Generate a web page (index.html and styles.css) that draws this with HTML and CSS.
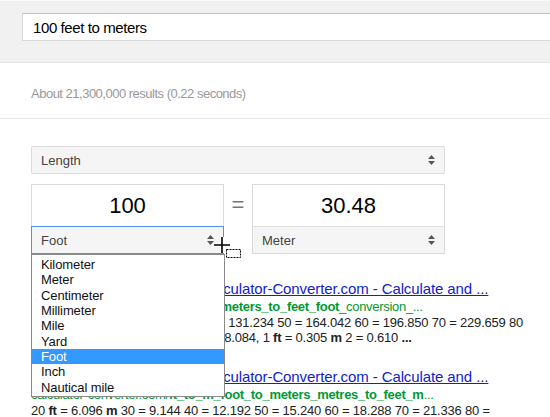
FILE: index.html
```html
<!DOCTYPE html>
<html>
<head>
<meta charset="utf-8">
<title>100 feet to meters</title>
<link rel="stylesheet" href="styles.css">
</head>
<body>
<div class="header">
  <div class="searchbox">100 feet to meters</div>
</div>
<div class="stats">About 21,300,000 results (0.22 seconds)</div>
<div class="main">
  <div class="conv">
    <div class="select">
      <span>Length</span>
      <svg class="arrows" width="7" height="10" viewBox="0 0 7 10"><path d="M3.5 0 L7 4 L0 4 Z M0 6 L7 6 L3.5 10 Z" fill="#555"/></svg>
    </div>
    <div class="row">
      <div class="box">
        <div class="value">100</div>
        <div class="select inbox focused">
          <span>Foot</span>
          <svg class="arrows" width="7" height="10" viewBox="0 0 7 10"><path d="M3.5 0 L7 4 L0 4 Z M0 6 L7 6 L3.5 10 Z" fill="#555"/></svg>
          <ul class="dropdown">
            <li>Kilometer</li>
            <li>Meter</li>
            <li>Centimeter</li>
            <li>Millimeter</li>
            <li>Mile</li>
            <li>Yard</li>
            <li class="sel">Foot</li>
            <li>Inch</li>
            <li>Nautical mile</li>
          </ul>
        </div>
      </div>
      <div class="eq">=</div>
      <div class="box">
        <div class="value">30.48</div>
        <div class="select inbox">
          <span>Meter</span>
          <svg class="arrows" width="7" height="10" viewBox="0 0 7 10"><path d="M3.5 0 L7 4 L0 4 Z M0 6 L7 6 L3.5 10 Z" fill="#555"/></svg>
        </div>
      </div>
    </div>
  </div>
  <div class="results">
    <div class="result">
      <a class="title" href="#">Meter to Feet Converter - Calculator-Converter.com - Calculate and ...</a>
      <div class="url">calculator-converter.com/<b>m_to_ft_meters_to_feet_foot</b>_conversion_...</div>
      <div class="snippet"><b>...</b> 20 <b>m</b> = 65.617 30 = 98.425 40 = 131.234 50 = 164.042 60 = 196.850 70 = 229.659 80<br>= 262.467, 90 = 295.276, 100 = 328.084, 1 <b>ft</b> = 0.305 <b>m</b> 2 = 0.610 <b>...</b></div>
    </div>
    <div class="result">
      <a class="title" href="#">Feet to Meter Converter - Calculator-Converter.com - Calculate and ...</a>
      <div class="url">calculator-converter.com/<b>ft_to_m_foot_to_meters_metres_to_feet_m</b>...</div>
      <div class="snippet">20 <b>ft</b> = 6.096 <b>m</b> 30 = 9.144 40 = 12.192 50 = 15.240 60 = 18.288 70 = 21.336 80 =</div>
    </div>
  </div>
</div>
<svg class="cursor" width="34" height="26" viewBox="0 0 34 26">
  <path d="M12 1 V17 M4 9 H20" stroke="#fff" stroke-width="4" fill="none"/>
  <path d="M12 1 V17 M4 9 H20" stroke="#000" stroke-width="1.6" fill="none"/>
  <rect x="16.5" y="13.5" width="14" height="8" fill="#fff" stroke="#000" stroke-width="1" stroke-dasharray="2 1"/>
</svg>
</body>
</html>
```
FILE: styles.css
```css
html, body {
  margin: 0;
  padding: 0;
  overflow: hidden;
}
body {
  width: 550px;
  height: 417px;
  position: relative;
  background: #fff;
  color: #222;
  font-family: Arial, "Liberation Sans", sans-serif;
}
.header {
  box-sizing: border-box;
  height: 63px;
  overflow: hidden;
  background: #f1f1f1;
  border-top: 1px solid #f8f8f8;
  border-bottom: 1px solid #e5e5e5;
  padding: 12px 0 0 22px;
}
.searchbox {
  box-sizing: border-box;
  width: 528px;
  height: 28px;
  background: #fff;
  border: 1px solid #d9d9d9;
  border-top-color: #c0c0c0;
  border-right: none;
  padding: 1px 0 0 10px;
  font-size: 15px;
  letter-spacing: -0.4px;
  line-height: 26px;
  color: #000;
}
.stats {
  padding: 23px 0 16px 31px;
  font-size: 13px;
  letter-spacing: -0.5px;
  line-height: 16px;
  color: #999;
  border-bottom: 1px solid #e8e8e8;
}
.main {
  padding: 27px 0 0 31px;
}
.conv {
  width: 414px;
}
.select {
  position: relative;
  box-sizing: border-box;
  height: 28px;
  display: flex;
  align-items: center;
  justify-content: space-between;
  padding: 0 9px;
  background: #f5f5f5;
  border: 1px solid #dcdcdc;
  border-radius: 2px;
  font-size: 13px;
  color: #444;
}
.row {
  display: flex;
  margin-top: 10px;
}
.box {
  box-sizing: border-box;
  width: 193px;
  height: 70px;
  border: 1px solid #d9d9d9;
  background: #fff;
  display: flex;
  flex-direction: column;
}
.value {
  height: 41px;
  line-height: 41px;
  text-align: center;
  font-size: 22px;
  color: #000;
}
.select.inbox {
  border: none;
  border-top: 1px solid #e0e0e0;
  border-radius: 0;
  height: 27px;
}
.select.inbox.focused {
  border: 1px solid #4d90fe;
  margin: 0 -1px -1px;
  height: 29px;
  padding-left: 9px;
}
.eq {
  width: 28px;
  text-align: center;
  font-size: 22px;
  line-height: 41px;
  color: #777;
}
.dropdown {
  position: absolute;
  left: -1px;
  top: 27px;
  width: 194px;
  box-sizing: border-box;
  margin: 0;
  padding: 2px 0 1px;
  list-style: none;
  background: #fff;
  border: 1px solid #8a8a8a;
  z-index: 5;
}
.dropdown li {
  height: 15.35px;
  line-height: 15.35px;
  padding-left: 9px;
  font-size: 13px;
  letter-spacing: -0.1px;
  color: #111;
}
.dropdown li.sel {
  background: #3399ff;
  color: #fff;
}
.results {
  margin-top: 26px;
  white-space: nowrap;
}
.result + .result {
  margin-top: 23px;
}
.title {
  display: block;
  font-size: 15px;
  letter-spacing: -0.1px;
  line-height: 18px;
  color: #1122cc;
  text-decoration: underline;
}
.url {
  margin-top: 1px;
  font-size: 13px;
  letter-spacing: -0.3px;
  line-height: 16px;
  color: #009933;
}
.snippet {
  font-size: 13px;
  letter-spacing: -0.2px;
  line-height: 15px;
  color: #222;
}
.cursor {
  position: absolute;
  left: 210px;
  top: 236px;
  z-index: 10;
}
```
